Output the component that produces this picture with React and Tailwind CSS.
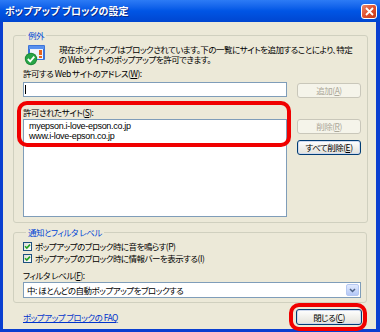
import React from 'react';

const font = "font-['Noto_Sans_CJK_JP','Noto_Sans',sans-serif] [font-feature-settings:'palt']";

const XpButton = ({ children, disabled, className = '' }) => (
  <div
    className={`flex items-center justify-center h-[15px] w-[64px] rounded-[3px] border text-[8.5px] leading-none ${
      disabled
        ? 'border-[#C9C7BA] bg-[#F5F4EA] text-[#ACA899]'
        : 'border-[#003C74] bg-gradient-to-b from-white to-[#E3E2DA] text-black shadow-[inset_0_0_0_1px_#CFD9EE]'
    } ${className}`}
  >
    {children}
  </div>
);

const Checkbox = () => (
  <div className="w-[9px] h-[9px] border border-[#1C5180] bg-gradient-to-br from-[#DCDCD7] to-white flex items-center justify-center shrink-0">
    <svg width="7" height="7" viewBox="0 0 7 7">
      <path d="M1 3.2 L2.8 5 L6 1.6" stroke="#21A121" strokeWidth="1.6" fill="none" />
    </svg>
  </div>
);

const PopupIcon = () => (
  <svg width="23" height="23" viewBox="0 0 23 23" className="shrink-0">
    <rect x="5" y="2" width="17" height="15" rx="1" fill="#3D74D8" />
    <rect x="6" y="3" width="15" height="3" fill="#5A91EE" />
    <rect x="7" y="6" width="13" height="10" fill="#EEF3FB" />
    <rect x="16" y="7" width="3" height="5" fill="#E8641B" />
    <rect x="16" y="13" width="3" height="2" fill="#E8641B" />
    <circle cx="8" cy="16" r="6.2" fill="#1E8B3A" />
    <circle cx="8" cy="16" r="5.2" fill="#27A546" />
    <path d="M4.8 16 L7.2 18.4 L11.3 13.6" stroke="white" strokeWidth="1.8" fill="none" />
  </svg>
);

const Group = ({ label, className = '', children }) => (
  <fieldset className={`border border-[#D0D0BF] rounded-[3px] ${className}`}>
    <legend className="ml-[3px] px-[2px] text-[#0046D5] leading-[12px]">{label}</legend>
    {children}
  </fieldset>
);

export default function App() {
  return (
    <div className={`w-[380px] h-[332px] flex flex-col bg-[#0A3FD0] overflow-hidden text-[8.5px] tracking-[-0.5px] text-black ${font}`}>
      {/* title bar */}
      <div className="h-[22px] shrink-0 flex items-center justify-between pl-[5px] pr-[3px] bg-gradient-to-b from-[#2C7BF5] via-[#0055E5] to-[#0046D0]">
        <span className="text-white font-bold text-[10px] tracking-normal leading-none [text-shadow:1px_1px_0_#0A2A8A]">ポップアップ ブロックの設定</span>
        <div className="w-[16px] h-[15px] rounded-[3px] border border-white bg-gradient-to-br from-[#E8876A] via-[#E0502F] to-[#C23A17] flex items-center justify-center">
          <svg width="9" height="9" viewBox="0 0 9 9">
            <path d="M1 1 L8 8 M8 1 L1 8" stroke="white" strokeWidth="1.8" />
          </svg>
        </div>
      </div>

      {/* body */}
      <div className="relative flex-1 ml-[3px] mr-[4px] mb-[3px] bg-[#ECE9D8] pl-[10px] pr-[9px] pt-[7px] flex flex-col">
        <Group label="例外" className="h-[194px] pl-[9px] pr-[6px]">
          <div className="flex items-start gap-[13px] pt-[2px]">
            <PopupIcon />
            <p className="leading-[10px] pt-[1px] whitespace-nowrap">
              現在ポップアップはブロックされています。下の一覧にサイトを追加することにより、特定
              <br />の Web サイトのポップアップを許可できます。
            </p>
          </div>
          <div className="mt-[1px] leading-[12px]">許可する Web サイトのアドレス(<span className="underline">W</span>):</div>
          <div className="flex items-start gap-[10px] mt-[3px]">
            <div className="w-[264px] h-[15px] border border-[#7F9DB9] bg-white pl-[1px] pt-[2px]">
              <div className="w-[1px] h-[9px] bg-black" />
            </div>
            <XpButton disabled className="mt-[1px]">追加(<span className="underline">A</span>)</XpButton>
          </div>
          <div className="mt-[8px] leading-[12px]">許可されたサイト(<span className="underline">S</span>):</div>
          <div className="flex items-start gap-[10px] mt-[1px]">
            <div className="w-[264px] h-[98px] border border-[#7F9DB9] bg-white pl-[5px] pt-[1px] text-[9px] leading-[10px] font-['Liberation_Sans',sans-serif] tracking-[-0.3px]">
              <div>myepson.i-love-epson.co.jp</div>
              <div>www.i-love-epson.co.jp</div>
            </div>
            <div className="flex flex-col gap-[6px]">
              <XpButton disabled>削除(<span className="underline">R</span>)</XpButton>
              <XpButton>すべて削除(<span className="underline">E</span>)</XpButton>
            </div>
          </div>
        </Group>

        <Group label="通知とフィルタ レベル" className="mt-[3px] h-[77px] pl-[9px] pr-[5px]">
          <div className="flex items-center gap-[3px] mt-[2px] leading-[12px]">
            <Checkbox />
            <span>ポップアップのブロック時に音を鳴らす(P)</span>
          </div>
          <div className="flex items-center gap-[3px] leading-[12px]">
            <Checkbox />
            <span>ポップアップのブロック時に情報バーを表示する(I)</span>
          </div>
          <div className="mt-[5px] leading-[12px]">フィルタ レベル(<span className="underline">F</span>):</div>
          <div className="mt-[1px] h-[16px] border border-[#7F9DB9] bg-white flex items-center justify-between pl-[3px] pr-[1px]">
            <span>中: ほとんどの自動ポップアップをブロックする</span>
            <div className="w-[13px] h-[12px] rounded-[2px] border border-[#B5C8F2] bg-gradient-to-b from-[#E1EAFE] to-[#B4C8F6] flex items-center justify-center">
              <svg width="7" height="5" viewBox="0 0 7 5">
                <path d="M1 1 L3.5 3.5 L6 1" stroke="#4D6185" strokeWidth="1.5" fill="none" />
              </svg>
            </div>
          </div>
        </Group>

        <div className="flex items-center justify-between mt-[6px] pl-[10px] pr-[5px]">
          <span className="text-[#0033CC] underline leading-[12px]">ポップアップ ブロックの FAQ</span>
          <XpButton className="w-[66px] h-[16px]">閉じる(<span className="underline">C</span>)</XpButton>
        </div>

        {/* red highlight annotations */}
        <div className="absolute left-[14px] top-[79px] w-[274px] h-[46px] rounded-[10px] border-[4px] border-[#F00000] pointer-events-none" />
        <div className="absolute left-[286px] top-[281px] w-[78px] h-[28px] rounded-[10px] border-[4px] border-[#F00000] pointer-events-none" />
      </div>
    </div>
  );
}
